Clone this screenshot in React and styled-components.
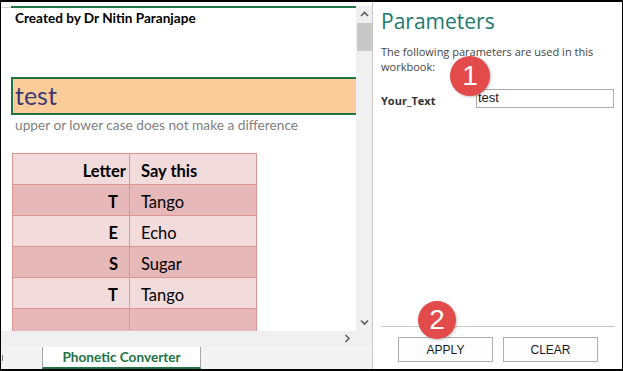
import React from 'react'
import styled, { createGlobalStyle } from 'styled-components'

const GlobalStyle = createGlobalStyle`
  html, body {
    margin: 0;
    padding: 0;
    background: #ffffff;
  }
  * {
    box-sizing: border-box;
  }
`

const sheetFont = `'Lato', 'Noto Sans', sans-serif`
const panelFont = `'Open Sans', 'Noto Sans', sans-serif`
const armFont = `'Liberation Sans', Arial, sans-serif`

const rows = [
  { letter: 'T', word: 'Tango' },
  { letter: 'E', word: 'Echo' },
  { letter: 'S', word: 'Sugar' },
  { letter: 'T', word: 'Tango' },
  { letter: '', word: '' }
]

const Chevron = ({ dir }) => {
  const paths = {
    up: 'M1 5 L4.5 1.5 L8 5',
    down: 'M1 1.5 L4.5 5 L8 1.5',
    right: 'M1.5 1 L5 4.5 L1.5 8'
  }
  const box = dir === 'right' ? '0 0 7 9' : '0 0 9 7'
  return (
    <svg width={dir === 'right' ? 7 : 9} height={dir === 'right' ? 9 : 7} viewBox={box}>
      <path d={paths[dir]} fill='none' stroke='#606060' strokeWidth='1.6' />
    </svg>
  )
}

const App = () => (
  <>
    <GlobalStyle />
    <Frame>
      <Sheet>
        <GridArea>
          <Cells>
            <TitleBlock>
              <Created>Created by Dr Nitin Paranjape</Created>
            </TitleBlock>
            <InputCell>test</InputCell>
            <Hint>upper or lower case does not make a difference</Hint>
            <Table>
              <tbody>
                <tr>
                  <HeadCell align='right'>Letter</HeadCell>
                  <HeadCell>Say this</HeadCell>
                </tr>
                {rows.map((r, i) => (
                  <tr key={i}>
                    <LetterCell odd={i % 2 === 0}>{r.letter}</LetterCell>
                    <WordCell odd={i % 2 === 0}>{r.word}</WordCell>
                  </tr>
                ))}
              </tbody>
            </Table>
          </Cells>
          <VScroll>
            <ArrowBox><Chevron dir='up' /></ArrowBox>
            <Thumb />
            <Track />
            <ArrowBox><Chevron dir='down' /></ArrowBox>
          </VScroll>
        </GridArea>
        <HScroll>
          <Chevron dir='right' />
        </HScroll>
        <TabBar>
          <TabTick />
          <SheetTab>Phonetic Converter</SheetTab>
        </TabBar>
      </Sheet>
      <Panel>
        <PanelTitle>Parameters</PanelTitle>
        <PanelText>The following parameters are used in this workbook:</PanelText>
        <ParamRow>
          <ParamLabel>Your_Text</ParamLabel>
          <ParamInput>test</ParamInput>
        </ParamRow>
        <Spacer />
        <Divider />
        <ButtonRow>
          <Button>APPLY</Button>
          <Button>CLEAR</Button>
        </ButtonRow>
        <Badge left={77} top={54} size={40}>1</Badge>
        <Badge left={45} top={299} size={38}>2</Badge>
      </Panel>
    </Frame>
  </>
)

const Frame = styled.div`
  width: 623px;
  height: 371px;
  display: flex;
  border-top: 2px solid #000;
  border-left: 1px solid #000;
  border-right: 1px solid #000;
  border-bottom: 2px solid #000;
  overflow: hidden;
`

const Sheet = styled.div`
  width: 372px;
  display: flex;
  flex-direction: column;
  border-right: 1px solid #c8c8c8;
`

const GridArea = styled.div`
  flex: 1;
  display: flex;
  min-height: 0;
`

const Cells = styled.div`
  flex: 1;
  padding-top: 4px;
  padding-left: 10px;
  overflow: hidden;
  position: relative;
  background: linear-gradient(#d0d0d0, #d0d0d0) 0 5px / 10px 1px no-repeat;
`

const TitleBlock = styled.div`
  height: 71px;
  border-top: 2px solid #217346;
  padding: 2px 0 0 4px;
`

const Created = styled.div`
  font-family: ${sheetFont};
  font-weight: 700;
  font-size: 13.6px;
  color: #000;
`

const InputCell = styled.div`
  height: 38px;
  background: #fccd98;
  border: 2px solid #217346;
  border-right: none;
  font-family: ${sheetFont};
  font-size: 25px;
  color: #3b3a78;
  padding-left: 2px;
  line-height: 32px;
`

const Hint = styled.div`
  font-family: ${sheetFont};
  font-size: 13.7px;
  color: #7f7f7f;
  padding: 1px 0 0 4px;
  height: 38px;
`

const Table = styled.table`
  border-collapse: collapse;
  margin-left: 1px;
  font-family: ${sheetFont};
  font-size: 16.5px;
  color: #000;
`

const HeadCell = styled.td`
  width: ${(p) => (p.align === 'right' ? '117px' : '127px')};
  height: 31px;
  background: #f2dcdb;
  border: 1px solid #da9694;
  font-weight: 700;
  text-align: ${(p) => p.align || 'left'};
  padding: 4px ${(p) => (p.align === 'right' ? '3px' : '0')} 0 ${(p) => (p.align === 'right' ? '0' : '11px')};
`

const LetterCell = styled.td`
  height: 31px;
  background: ${(p) => (p.odd ? '#e6b8b7' : '#f2dcdb')};
  border: 1px solid #da9694;
  font-weight: 700;
  text-align: right;
  padding: 4px 11px 0 0;
`

const WordCell = styled.td`
  height: 31px;
  background: ${(p) => (p.odd ? '#e6b8b7' : '#f2dcdb')};
  border: 1px solid #da9694;
  padding: 4px 0 0 11px;
`

const VScroll = styled.div`
  width: 16px;
  margin-top: 4px;
  background: #f0f0f0;
  display: flex;
  flex-direction: column;
  align-items: center;
`

const ArrowBox = styled.div`
  height: 17px;
  width: 16px;
  display: flex;
  align-items: center;
  justify-content: center;
`

const Thumb = styled.div`
  width: 15px;
  height: 28px;
  background: #c8c8c8;
`

const Track = styled.div`
  flex: 1;
`

const HScroll = styled.div`
  height: 15px;
  background: #f0f0f0;
  display: flex;
  align-items: center;
  justify-content: flex-end;
  padding-right: 21px;
`

const TabBar = styled.div`
  height: 23px;
  background: #f3f3f3;
  display: flex;
  align-items: stretch;
  padding-left: 41px;
  position: relative;
`

const TabTick = styled.div`
  position: absolute;
  left: 1px;
  top: 9px;
  width: 1px;
  height: 6px;
  background: #777;
`

const SheetTab = styled.div`
  width: 159px;
  margin-top: 1px;
  background: #fff;
  border-left: 1px solid #a6a6a6;
  border-right: 1px solid #a6a6a6;
  border-bottom: 2px solid #217346;
  font-family: ${sheetFont};
  font-weight: 700;
  font-size: 13.6px;
  color: #217346;
  display: flex;
  align-items: center;
  justify-content: center;
`

const Panel = styled.div`
  flex: 1;
  position: relative;
  display: flex;
  flex-direction: column;
  padding: 5px 7px 7px 8px;
  background: #fff;
`

const PanelTitle = styled.div`
  font-family: ${panelFont};
  font-weight: 400;
  font-size: 21px;
  color: #217a6e;
  line-height: 28px;
`

const PanelText = styled.div`
  margin-top: 9px;
  width: 222px;
  font-family: ${panelFont};
  font-size: 11px;
  line-height: 15px;
  color: #444;
`

const ParamRow = styled.div`
  margin-top: 15px;
  display: flex;
  align-items: center;
`

const ParamLabel = styled.div`
  width: 95px;
  font-family: ${panelFont};
  font-weight: 700;
  font-size: 11px;
  color: #333;
  padding-top: 4px;
`

const ParamInput = styled.div`
  width: 138px;
  height: 19px;
  border: 1px solid #ababab;
  font-family: ${armFont};
  font-size: 13px;
  line-height: 15px;
  color: #1a1a1a;
  padding-left: 1px;
`

const Spacer = styled.div`
  flex: 1;
`

const Divider = styled.div`
  height: 1px;
  background: #c6c6c6;
`

const ButtonRow = styled.div`
  display: flex;
  gap: 10px;
  padding: 10px 0 0 17px;
`

const Button = styled.div`
  width: 95px;
  height: 25px;
  border: 1px solid #adadad;
  background: #fdfdfd;
  font-family: ${armFont};
  font-size: 12px;
  color: #1a1a2a;
  display: flex;
  align-items: center;
  justify-content: center;
`

const Badge = styled.div`
  position: absolute;
  left: ${(p) => p.left}px;
  top: ${(p) => p.top}px;
  width: ${(p) => p.size}px;
  height: ${(p) => p.size}px;
  border-radius: 50%;
  background: #e34a4a;
  box-shadow: 1px 1px 3px rgba(0, 0, 0, 0.25);
  color: #fff;
  font-family: ${armFont};
  font-size: 28px;
  display: flex;
  align-items: center;
  justify-content: center;
`

export default App
